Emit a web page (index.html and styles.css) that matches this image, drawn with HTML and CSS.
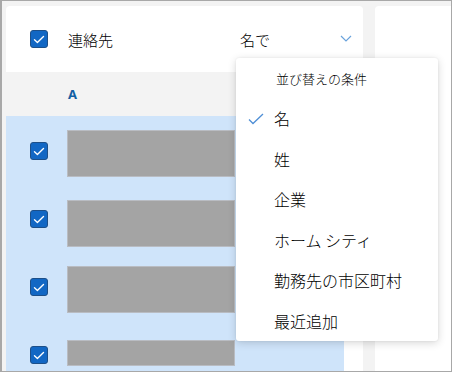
FILE: index.html
```html
<!DOCTYPE html>
<html lang="ja">
<head>
    <meta charset="UTF-8">
    <meta name="viewport" content="width=device-width, initial-scale=1.0">
    <title>連絡先</title>
    <link rel="stylesheet" href="styles.css">
</head>
<body>
    <div class="window">
        <div class="contacts">
            <div class="header-card">
                <span class="checkbox"><svg width="12" height="9" viewBox="0 0 12 9"><path d="M1.5 4.8 L4.4 7.4 L10.5 1.6" fill="none" stroke="#fff" stroke-width="1.4" stroke-linecap="round" stroke-linejoin="round"/></svg></span>
                <span class="header-title">連絡先</span>
                <span class="sort-label">名で</span>
                <svg class="chevron" width="12" height="7" viewBox="0 0 12 7"><path d="M1 1 L6 6 L11 1" fill="none" stroke="#6aa3dc" stroke-width="1.2"/></svg>
            </div>
            <div class="letter-row">A</div>
            <div class="list">
                <div class="selected">
                    <div class="row">
                        <span class="checkbox"><svg width="12" height="9" viewBox="0 0 12 9"><path d="M1.5 4.8 L4.4 7.4 L10.5 1.6" fill="none" stroke="#fff" stroke-width="1.4" stroke-linecap="round" stroke-linejoin="round"/></svg></span>
                        <span class="redact"></span>
                    </div>
                    <div class="row">
                        <span class="checkbox"><svg width="12" height="9" viewBox="0 0 12 9"><path d="M1.5 4.8 L4.4 7.4 L10.5 1.6" fill="none" stroke="#fff" stroke-width="1.4" stroke-linecap="round" stroke-linejoin="round"/></svg></span>
                        <span class="redact second"></span>
                    </div>
                    <div class="row">
                        <span class="checkbox"><svg width="12" height="9" viewBox="0 0 12 9"><path d="M1.5 4.8 L4.4 7.4 L10.5 1.6" fill="none" stroke="#fff" stroke-width="1.4" stroke-linecap="round" stroke-linejoin="round"/></svg></span>
                        <span class="redact"></span>
                    </div>
                    <div class="row">
                        <span class="checkbox"><svg width="12" height="9" viewBox="0 0 12 9"><path d="M1.5 4.8 L4.4 7.4 L10.5 1.6" fill="none" stroke="#fff" stroke-width="1.4" stroke-linecap="round" stroke-linejoin="round"/></svg></span>
                        <span class="redact short"></span>
                    </div>
                </div>
            </div>
        </div>
        <div class="side-card"></div>

        <div class="sort-menu">
            <div class="menu-title">並び替えの条件</div>
            <div class="menu-item checked">
                <svg class="tick" width="16" height="12" viewBox="0 0 16 12"><path d="M1 6.5 L5 10.5 L15 1" fill="none" stroke="#4f8fd6" stroke-width="1.3"/></svg>
                名
            </div>
            <div class="menu-item">姓</div>
            <div class="menu-item">企業</div>
            <div class="menu-item">ホーム シティ</div>
            <div class="menu-item">勤務先の市区町村</div>
            <div class="menu-item">最近追加</div>
        </div>
    </div>
</body>
</html>
```
FILE: styles.css
```css
body {
    margin: 0;
    font-family: "Noto Sans CJK JP", "Noto Sans", sans-serif;
    font-weight: 300;
    color: #000;
}
.window {
    position: relative;
    box-sizing: border-box;
    width: 452px;
    height: 372px;
    border: 1px solid #a8a8a8;
    border-left-width: 2px;
    background-color: #f3f3f3;
    display: flex;
    gap: 12px;
    padding: 5px 0 0 4px;
    overflow: hidden;
}
.contacts {
    width: 357px;
    display: flex;
    flex-direction: column;
}
.header-card {
    flex: none;
    height: 66px;
    background-color: #fff;
    border-radius: 4px 4px 0 0;
    display: flex;
    align-items: center;
    padding: 0 11px 0 24px;
}
.checkbox {
    box-sizing: border-box;
    width: 18px;
    height: 18px;
    flex: none;
    border: 1px solid #1d4f88;
    border-radius: 3px;
    background-color: #1267c4;
    display: flex;
    align-items: center;
    justify-content: center;
}
.header-title {
    margin-left: 20px;
    font-size: 15px;
}
.sort-label {
    margin-left: auto;
    width: 100px;
    font-size: 15px;
}
.chevron {
    margin-top: -2px;
}
.letter-row {
    flex: none;
    height: 44px;
    display: flex;
    align-items: center;
    padding-left: 62px;
    font-family: "Noto Sans", sans-serif;
    font-weight: 700;
    font-size: 13px;
    color: #115ea3;
}
.list {
    flex: 1;
    min-height: 0;
    overflow: hidden;
    background-color: #fff;
}
.selected {
    width: 338px;
    height: 100%;
    background-color: #cfe4fa;
}
.row {
    height: 68px;
    display: flex;
    align-items: flex-start;
    padding-left: 24px;
}
.row .checkbox {
    margin-top: 26px;
}
.redact {
    box-sizing: border-box;
    width: 168px;
    height: 47px;
    margin: 14px 0 0 19px;
    background-color: #a4a4a4;
    border: 1px solid #b9bcc2;
}
.redact.second {
    margin-top: 16px;
}
.redact.short {
    margin-top: 20px;
    height: 26px;
}
.side-card {
    flex: 1;
    background-color: #fff;
    border-radius: 4px 0 0 0;
}
.sort-menu {
    position: absolute;
    left: 234px;
    top: 57px;
    width: 202px;
    background-color: #fff;
    border-radius: 3px;
    box-shadow: 0 2px 8px rgba(0, 0, 0, 0.16), 0 0 2px rgba(0, 0, 0, 0.08);
}
.menu-title {
    height: 40px;
    display: flex;
    align-items: center;
    padding-left: 40px;
    font-size: 13px;
}
.menu-item {
    position: relative;
    height: 40.5px;
    display: flex;
    align-items: center;
    padding-left: 38px;
    font-size: 16px;
}
.tick {
    position: absolute;
    left: 12px;
    top: 15px;
}
```
